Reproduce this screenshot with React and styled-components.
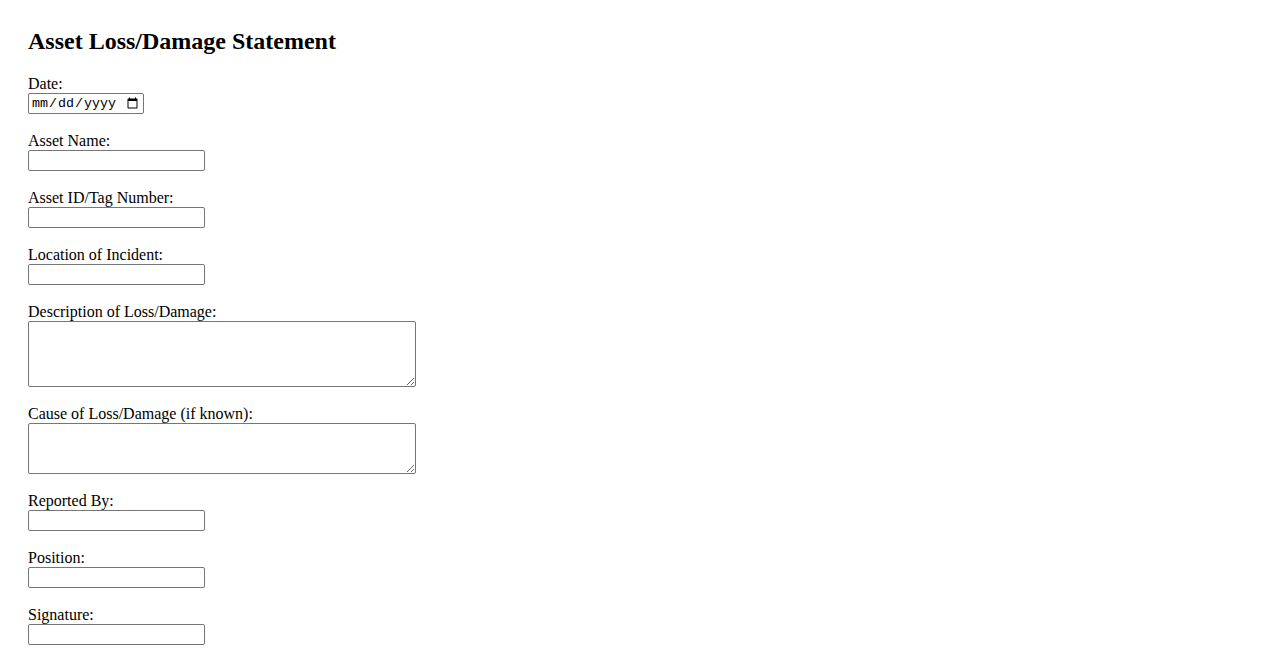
import styled, { createGlobalStyle } from "styled-components";

const GlobalStyle = createGlobalStyle`
    html, body {
        margin: 0;
        padding: 0;
        background: #fff;
        color: #000;
        font-family: "Liberation Serif", "Times New Roman", serif;
        font-size: 16px;
    }
`;

const Page = styled.div`
    padding: 28px;
`;

const Title = styled.h2`
    margin: 0 0 22px 0;
    font-size: 24px;
    line-height: 26px;
    font-weight: 700;
`;

const Form = styled.form`
    display: flex;
    flex-direction: column;
    align-items: flex-start;
`;

const Field = styled.div`
    display: flex;
    flex-direction: column;
    align-items: flex-start;
    margin-bottom: 19px;
`;

const Label = styled.label`
    display: block;
    line-height: 15px;
    height: 17px;
`;

const Input = styled.input`
    display: block;
    box-sizing: border-box;
    margin: 0;
    width: ${(p) => (p.type === "date" ? "116px" : "177px")};
    height: 21px;
    border: 1px solid #767676;
    border-radius: 2px;
    padding: 1px 2px;
    font-size: 13.33px;
    font-family: ${(p) => (p.type === "date" ? '"Liberation Mono", monospace' : '"Liberation Sans", Arial, sans-serif')};
`;

const TextArea = styled.textarea`
    display: block;
    box-sizing: border-box;
    margin: 0;
    width: 388px;
    height: ${(p) => p.$h}px;
    border: 1px solid #767676;
    border-radius: 2px;
    padding: 2px;
    font-size: 13.33px;
    font-family: "Liberation Mono", monospace;
    resize: both;
`;

const fields = [
    { id: "date", label: "Date:", type: "date" },
    { id: "assetName", label: "Asset Name:", type: "text" },
    { id: "assetId", label: "Asset ID/Tag Number:", type: "text" },
    { id: "location", label: "Location of Incident:", type: "text" },
    { id: "description", label: "Description of Loss/Damage:", area: 66 },
    { id: "cause", label: "Cause of Loss/Damage (if known):", area: 51 },
    { id: "reportedBy", label: "Reported By:", type: "text" },
    { id: "position", label: "Position:", type: "text" },
    { id: "signature", label: "Signature:", type: "text" },
];

function App() {
    return (
        <>
            <GlobalStyle />
            <Page>
                <Title>Asset Loss/Damage Statement</Title>
                <Form onSubmit={(e) => e.preventDefault()}>
                    {fields.map((f) => (
                        <Field key={f.id}>
                            <Label htmlFor={f.id}>{f.label}</Label>
                            {f.area ? (
                                <TextArea id={f.id} $h={f.area} />
                            ) : (
                                <Input id={f.id} type={f.type} />
                            )}
                        </Field>
                    ))}
                </Form>
            </Page>
        </>
    );
}

export default App;
